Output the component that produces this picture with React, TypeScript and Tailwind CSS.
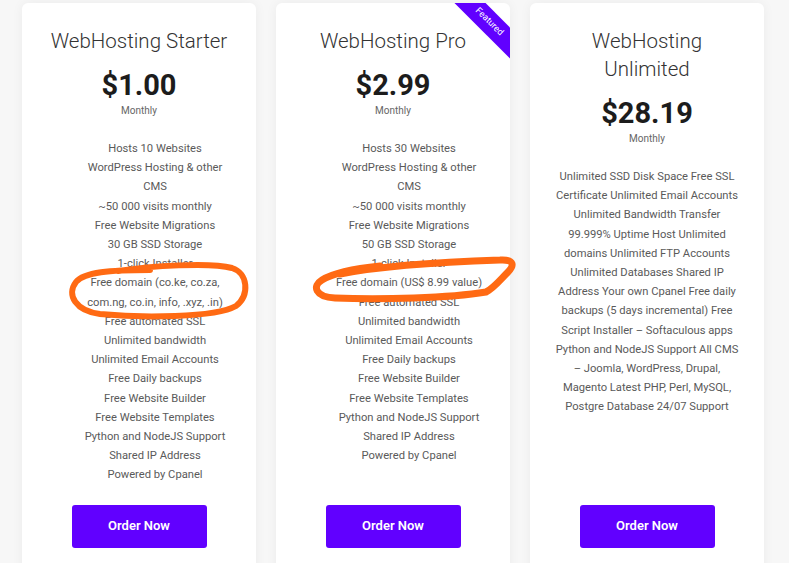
const plans = [
  {
    name: 'WebHosting Starter',
    price: '$1.00',
    features: [
      'Hosts 10 Websites',
      'WordPress Hosting & other CMS',
      '~50 000 visits monthly',
      'Free Website Migrations',
      '30 GB SSD Storage',
      '1-click Installer',
      'Free domain (co.ke, co.za, com.ng, co.in, info, .xyz, .in)',
      'Free automated SSL',
      'Unlimited bandwidth',
      'Unlimited Email Accounts',
      'Free Daily backups',
      'Free Website Builder',
      'Free Website Templates',
      'Python and NodeJS Support',
      'Shared IP Address',
      'Powered by Cpanel',
    ],
  },
  {
    name: 'WebHosting Pro',
    price: '$2.99',
    featured: true,
    features: [
      'Hosts 30 Websites',
      'WordPress Hosting & other CMS',
      '~50 000 visits monthly',
      'Free Website Migrations',
      '50 GB SSD Storage',
      '1-click Installer',
      'Free domain (US$ 8.99 value)',
      'Free automated SSL',
      'Unlimited bandwidth',
      'Unlimited Email Accounts',
      'Free Daily backups',
      'Free Website Builder',
      'Free Website Templates',
      'Python and NodeJS Support',
      'Shared IP Address',
      'Powered by Cpanel',
    ],
  },
];

const unlimitedLines = [
  'Unlimited SSD Disk Space Free SSL',
  'Certificate Unlimited Email Accounts',
  'Unlimited Bandwidth Transfer',
  '99.999% Uptime Host Unlimited',
  'domains Unlimited FTP Accounts',
  'Unlimited Databases Shared IP',
  'Address Your own Cpanel Free daily',
  'backups (5 days incremental) Free',
  'Script Installer – Softaculous apps',
  'Python and NodeJS Support All CMS',
  '– Joomla, WordPress, Drupal,',
  'Magento Latest PHP, Perl, MySQL,',
  'Postgre Database 24/07 Support',
];

function Header({ name, price }: { name: string; price: string }) {
  return (
    <div className="flex flex-col items-center text-center">
      <h3 className="w-full text-[20.5px] leading-[28px] font-light text-[#333]">{name}</h3>
      <div className="mt-[13px] text-[29px] leading-[34px] font-bold text-[#1c1c1c]">{price}</div>
      <div className="mt-[2px] text-[10px] leading-[14px] text-[#666]">Monthly</div>
    </div>
  );
}

function OrderButton() {
  return (
    <button className="mt-auto mx-auto w-[135px] h-[43px] rounded-[3px] bg-[#6100ff] text-white text-[13px] font-semibold">
      Order Now
    </button>
  );
}

export default function App() {
  return (
    <div
      className="relative min-h-[563px] bg-[#f7f7f7] text-[#5a5a5a]"
      style={{ fontFamily: 'Roboto, "Liberation Sans", sans-serif' }}
    >
      <div className="flex gap-[20px] pl-[22px] pt-[3px]">
        {plans.map((p) => (
          <div
            key={p.name}
            className="relative w-[234px] overflow-hidden rounded-[6px] bg-white px-[22px] pt-[24px] pb-[30px] flex flex-col shadow-[0_0_12px_rgba(0,0,0,0.05)]"
          >
            {p.featured && (
              <div className="absolute right-[-29px] top-[8px] w-[100px] h-[22px] rotate-45 bg-[#6100ff] text-white text-[9px] flex items-center justify-center">
                Featured
              </div>
            )}
            <Header name={p.name} price={p.price} />
            <ul className="mt-[21px] mb-[20px] pl-[36px] pr-[4px] text-center text-[11.2px] leading-[19.2px]">
              {p.features.map((f) => (
                <li key={f}>{f}</li>
              ))}
            </ul>
            <OrderButton />
          </div>
        ))}
        <div className="relative w-[234px] overflow-hidden rounded-[6px] bg-white px-[22px] pt-[24px] pb-[30px] flex flex-col shadow-[0_0_12px_rgba(0,0,0,0.05)]">
          <Header name="WebHosting Unlimited" price="$28.19" />
          <p className="mt-[21px] mb-[20px] text-center text-[11.2px] leading-[19.2px]">
            {unlimitedLines.map((l, i) => (
              <span key={i} className="block whitespace-nowrap">
                {l}
              </span>
            ))}
          </p>
          <OrderButton />
        </div>
      </div>

      {/* hand-drawn highlight marks */}
      <svg
        className="absolute left-0 top-0 pointer-events-none"
        width="789"
        height="563"
        viewBox="0 0 789 563"
        fill="none"
      >
        <path
          d="M118 271 C150 266 210 262 232 268 C248 273 250 295 236 306 C215 318 140 318 100 314 C76 311 66 295 76 282 C84 272 110 270 150 270"
          stroke="#ff6a13"
          strokeWidth="6"
          strokeLinecap="round"
          strokeLinejoin="round"
        />
        <path
          d="M340 274 C380 266 440 262 500 260 C515 259 514 266 508 272 C500 280 494 288 486 292 C450 298 380 300 335 298 C315 297 312 286 322 280 C335 272 360 268 380 266"
          stroke="#ff6a13"
          strokeWidth="7"
          strokeLinecap="round"
          strokeLinejoin="round"
        />
      </svg>
    </div>
  );
}
